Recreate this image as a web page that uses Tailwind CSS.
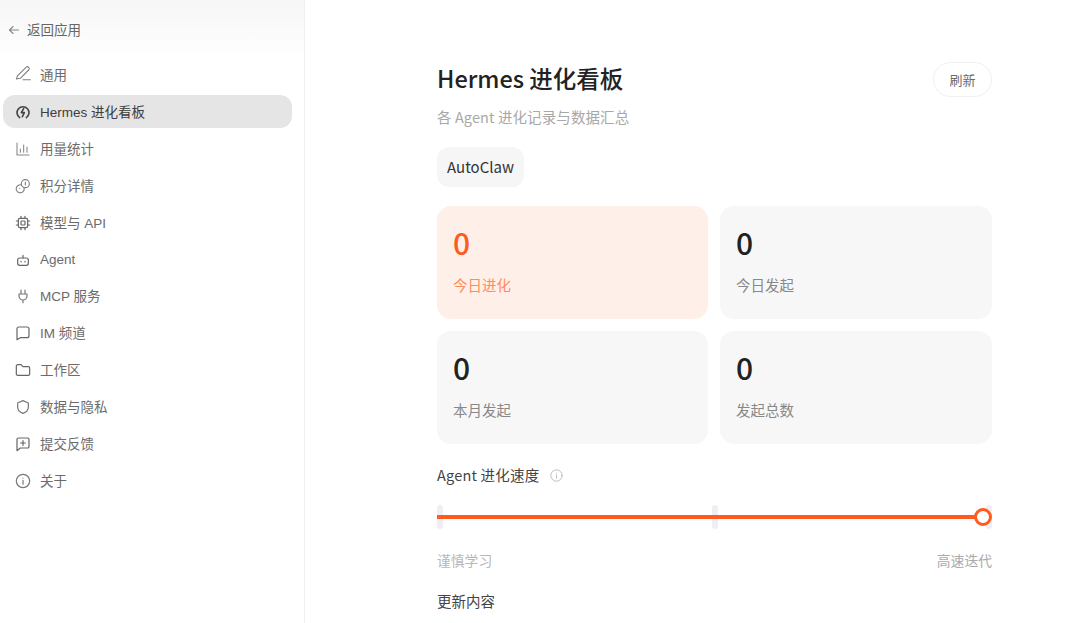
<!DOCTYPE html>
<html lang="zh-CN">
<head>
    <meta charset="UTF-8">
    <title>Hermes 进化看板</title>
    <script src="https://cdn.jsdelivr.net/npm/@tailwindcss/browser@4"></script>
</head>
<body class="bg-white h-[623px] overflow-hidden font-['Liberation_Sans','Noto_Sans_CJK_SC',sans-serif]">
    <div class="flex h-[623px]">
        <!-- Sidebar -->
        <aside class="w-[305px] shrink-0 border-r border-[#f0f0f0] bg-white">
            <div class="h-[58px] pl-[8px] flex items-center gap-[7px] pt-[2px] bg-gradient-to-b from-[#f6f6f6] to-white text-[13.5px] text-[#666666]">
                <svg class="w-[12px] h-[12px]" fill="none" stroke="#888888" stroke-width="2.200" stroke-linecap="round" stroke-linejoin="round" viewBox="0 0 24 24"><path d="M21 12H3M10 5l-7 7 7 7"/></svg>
                <span class="pt-[2px]">返回应用</span>
            </div>
            <nav class="pl-[3px] pr-[12px] flex flex-col gap-[4px] text-[13.5px] text-[#6b6b6b]">
                <a class="h-[33px] pl-[12px] flex items-center gap-[9px]">
                    <svg class="w-[16px] h-[16px] -mt-[3px]" fill="none" stroke="#808080" stroke-width="1.600" stroke-linecap="round" stroke-linejoin="round" viewBox="0 0 24 24"><path d="M2 21 4 16 16.500 3.500a2.800 2.800 0 0 1 4 4L8 20zM12 22h11"/></svg>
                    <span class="pt-[4px]">通用</span>
                </a>
                <a class="h-[33px] pl-[12px] flex items-center gap-[9px] rounded-[12px] bg-[#e5e5e5] text-[#3d3d3d]">
                    <svg class="w-[16px] h-[16px]" fill="none" stroke="#444444" stroke-width="2.400" stroke-linecap="round" stroke-linejoin="round" viewBox="0 0 24 24"><path d="M7 20.500a9 9 0 1 1 10 0M13 7l-3.500 6H14l-3 6"/></svg>
                    <span class="pt-[4px]">Hermes 进化看板</span>
                </a>
                <a class="h-[33px] pl-[12px] flex items-center gap-[9px] pt-[1px]">
                    <svg class="w-[16px] h-[16px]" fill="none" stroke="#888888" stroke-width="1.600" stroke-linecap="round" stroke-linejoin="round" viewBox="0 0 24 24"><path d="M3 3v18h18M8 17v-5M13 17V6M18 17v-8"/></svg>
                    <span class="pt-[2px]">用量统计</span>
                </a>
                <a class="h-[33px] pl-[12px] flex items-center gap-[9px] pt-[1px]">
                    <svg class="w-[16px] h-[16px]" fill="none" stroke="#808080" stroke-width="1.700" stroke-linecap="round" stroke-linejoin="round" viewBox="0 0 24 24"><circle cx="15.500" cy="8.500" r="6"/><path d="M9.600 10.500a6 6 0 1 0 3.900 3.900M15.500 6.500v4M7 15.500h.01"/></svg>
                    <span class="pt-[2px]">积分详情</span>
                </a>
                <a class="h-[33px] pl-[12px] flex items-center gap-[9px] pt-[1px]">
                    <svg class="w-[16px] h-[16px]" fill="none" stroke="#666666" stroke-width="1.800" stroke-linecap="round" stroke-linejoin="round" viewBox="0 0 24 24"><rect x="5" y="5" width="14" height="14" rx="2.500"/><rect x="9" y="9" width="6" height="6" rx="1"/><path d="M9 2v3M15 2v3M9 19v3M15 19v3M2 9h3M2 15h3M19 9h3M19 15h3"/></svg>
                    <span class="pt-[2px]">模型与 API</span>
                </a>
                <a class="h-[32px] pl-[12px] flex items-center gap-[9px] pt-[1px]">
                    <svg class="w-[16px] h-[16px]" fill="none" stroke="#666666" stroke-width="1.800" stroke-linecap="round" stroke-linejoin="round" viewBox="0 0 24 24"><rect x="4" y="9" width="16" height="11" rx="3"/><path d="M12 9V5M12 5h.01M9 14v1M15 14v1"/></svg>
                    <span class="pt-[2px]">Agent</span>
                </a>
                <a class="h-[33px] pl-[12px] flex items-center gap-[9px] pt-[1px]">
                    <svg class="w-[16px] h-[16px]" fill="none" stroke="#777777" stroke-width="1.800" stroke-linecap="round" stroke-linejoin="round" viewBox="0 0 24 24"><path d="M9 3v6M15 3v6M6 9h12v3a6 6 0 0 1-12 0zM12 18v4"/></svg>
                    <span class="pt-[2px]">MCP 服务</span>
                </a>
                <a class="h-[33px] pl-[12px] flex items-center gap-[9px] pt-[1px]">
                    <svg class="w-[16px] h-[16px]" fill="none" stroke="#666666" stroke-width="1.800" stroke-linecap="round" stroke-linejoin="round" viewBox="0 0 24 24"><path d="M3 6a3 3 0 0 1 3-3h12a3 3 0 0 1 3 3v10a3 3 0 0 1-3 3H8l-5 3z"/></svg>
                    <span class="pt-[2px]">IM 频道</span>
                </a>
                <a class="h-[33px] pl-[12px] flex items-center gap-[9px] pt-[1px]">
                    <svg class="w-[16px] h-[16px]" fill="none" stroke="#666666" stroke-width="1.800" stroke-linecap="round" stroke-linejoin="round" viewBox="0 0 24 24"><path d="M2 6a2 2 0 0 1 2-2h5l3 3h8a2 2 0 0 1 2 2v9a2 2 0 0 1-2 2H4a2 2 0 0 1-2-2z"/></svg>
                    <span class="pt-[2px]">工作区</span>
                </a>
                <a class="h-[33px] pl-[12px] flex items-center gap-[9px] pt-[1px]">
                    <svg class="w-[16px] h-[16px]" fill="none" stroke="#777777" stroke-width="1.800" stroke-linecap="round" stroke-linejoin="round" viewBox="0 0 24 24"><path d="M12 2.500 20 6v6c0 5-3.500 8-8 9.500C7.500 20 4 17 4 12V6z"/></svg>
                    <span class="pt-[2px]">数据与隐私</span>
                </a>
                <a class="h-[33px] pl-[12px] flex items-center gap-[9px] pt-[1px]">
                    <svg class="w-[16px] h-[16px]" fill="none" stroke="#666666" stroke-width="1.800" stroke-linecap="round" stroke-linejoin="round" viewBox="0 0 24 24"><path d="M3 5a2 2 0 0 1 2-2h14a2 2 0 0 1 2 2v11a2 2 0 0 1-2 2H8l-5 4zM12 7v7M8.500 10.500h7"/></svg>
                    <span class="pt-[2px]">提交反馈</span>
                </a>
                <a class="h-[33px] pl-[12px] flex items-center gap-[9px] pt-[1px]">
                    <svg class="w-[16px] h-[16px]" fill="none" stroke="#777777" stroke-width="1.800" stroke-linecap="round" stroke-linejoin="round" viewBox="0 0 24 24"><circle cx="12" cy="12" r="10"/><path d="M12 11v6M12 7.500h.01"/></svg>
                    <span class="pt-[2px]">关于</span>
                </a>
            </nav>
        </aside>

        <!-- Main -->
        <main class="flex-1 pl-[132px] pr-[88px] pt-[62px] font-['Noto_Sans_CJK_SC',sans-serif]">
            <div class="flex items-start justify-between">
                <div>
                    <h1 class="text-[23.5px] leading-[32px] font-medium text-[#222222]">Hermes 进化看板</h1>
                    <p class="mt-[13px] text-[14.5px] tracking-[0.1px] leading-[20px] text-[#a8a8a8]">各 Agent 进化记录与数据汇总</p>
                </div>
                <button class="w-[59px] h-[35px] rounded-full border border-[#f0f0f0] bg-white text-[13px] text-[#6b6b6b]">刷新</button>
            </div>
            <div class="mt-[20px] w-[87px] h-[40px] rounded-[12px] bg-[#f6f6f6] flex items-center justify-center text-[15px] text-[#333333]">AutoClaw</div>

            <div class="mt-[19px] grid grid-cols-[271px_272px] gap-[12px]">
                <div class="h-[113px] rounded-[14px] bg-[#ffefe9] pl-[16px] pt-[14px]">
                    <div class="text-[30px] leading-[44px] font-medium text-[#ff5a1f]">0</div>
                    <div class="mt-[11px] text-[14.500px] leading-[20px] text-[#ff8a5c]">今日进化</div>
                </div>
                <div class="h-[113px] rounded-[14px] bg-[#f7f7f7] pl-[16px] pt-[14px]">
                    <div class="text-[30px] leading-[44px] font-medium text-[#222222]">0</div>
                    <div class="mt-[11px] text-[14.500px] leading-[20px] text-[#888888]">今日发起</div>
                </div>
                <div class="h-[113px] rounded-[14px] bg-[#f7f7f7] pl-[16px] pt-[14px]">
                    <div class="text-[30px] leading-[44px] font-medium text-[#222222]">0</div>
                    <div class="mt-[11px] text-[14.500px] leading-[20px] text-[#888888]">本月发起</div>
                </div>
                <div class="h-[113px] rounded-[14px] bg-[#f7f7f7] pl-[16px] pt-[14px]">
                    <div class="text-[30px] leading-[44px] font-medium text-[#222222]">0</div>
                    <div class="mt-[11px] text-[14.500px] leading-[20px] text-[#888888]">发起总数</div>
                </div>
            </div>

            <div class="mt-[20px] flex items-center gap-[11px] text-[14.5px] tracking-[0.2px] leading-[22px] text-[#444444]">
                <span>Agent 进化速度</span>
                <svg class="w-[13px] h-[13px]" fill="none" stroke="#b5b5b5" stroke-width="1.600" stroke-linecap="round" viewBox="0 0 24 24"><circle cx="12" cy="12" r="10.500"/><path d="M12 11v6M12 7.500h.01"/></svg>
            </div>

            <!-- slider -->
            <div class="relative mt-[19px] h-[24px]">
                <div class="flex justify-between h-full">
                    <span class="w-[6px] rounded-[3px] bg-[#eeeef4]"></span>
                    <span class="w-[6px] rounded-[3px] bg-[#eeeef4]"></span>
                    <span class="w-[6px] rounded-[3px] bg-[#eeeef4]"></span>
                </div>
                <div class="absolute left-0 right-[4px] top-[10px] h-[4px] bg-[#ff5a1f]"></div>
                <div class="absolute right-0 top-[3px] w-[18px] h-[18px] rounded-full border-[3px] border-[#ff5a1f] bg-white"></div>
            </div>

            <div class="mt-[21px] flex justify-between text-[13.8px] leading-[20px] text-[#b8b8b8]">
                <span>谨慎学习</span>
                <span class="text-[#aaaaaa]">高速迭代</span>
            </div>
            <div class="mt-[21px] text-[14.5px] leading-[20px] text-[#444444]">更新内容</div>
        </main>
    </div>
</body>
</html>
